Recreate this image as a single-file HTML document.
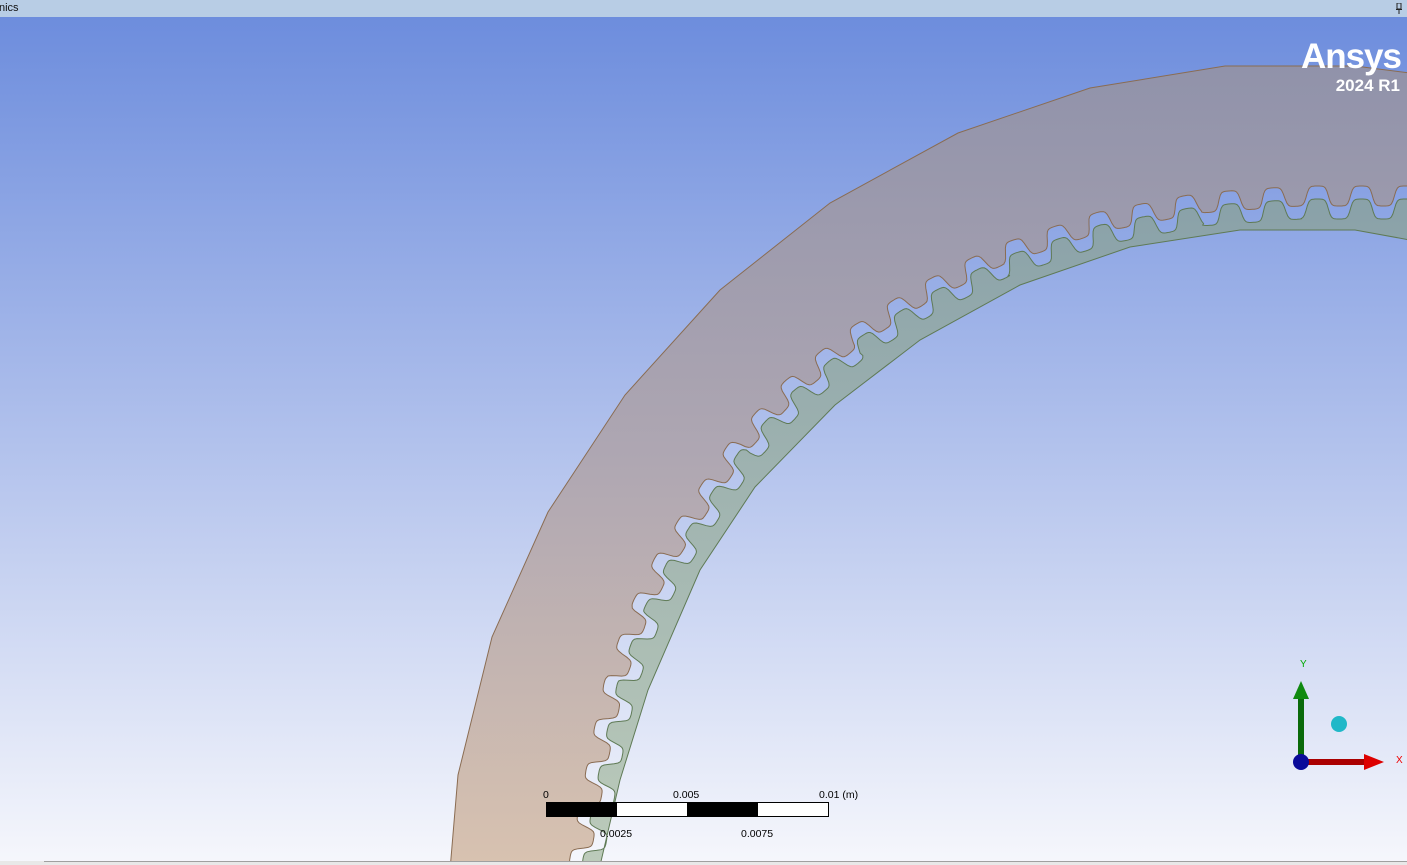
<!DOCTYPE html>
<html><head><meta charset="utf-8"><style>
html,body{margin:0;padding:0;width:1407px;height:865px;overflow:hidden;font-family:"Liberation Sans",sans-serif}
#t{position:absolute;left:0;top:0;width:1407px;height:17px;background:#b8cde5;font-size:11px;line-height:17px;color:#111}
#v{position:absolute;left:0;top:17px}
</style></head><body>
<div id="t"><span style="position:absolute;left:-1px">nics</span><svg style="position:absolute;right:5px;top:3px" width="6" height="11"><rect x="1" y="0" width="4" height="6" fill="none" stroke="#222" stroke-width="1"/><rect x="0" y="6" width="6" height="1" fill="#222"/><rect x="2.5" y="7" width="1" height="4" fill="#222"/></svg></div>
<svg id="v" width="1407" height="848" viewBox="0 17 1407 848">
<defs>
<linearGradient id="bg" gradientUnits="userSpaceOnUse" x1="0" y1="17" x2="0" y2="865">
<stop offset="0" stop-color="#6d8ddd"/><stop offset="0.5" stop-color="#b1c1ec"/><stop offset="1" stop-color="#f6f7fc"/></linearGradient>
<linearGradient id="pk" gradientUnits="userSpaceOnUse" x1="0" y1="60" x2="0" y2="865">
<stop offset="0" stop-color="#9092aa"/><stop offset="0.5" stop-color="#afa7b2"/><stop offset="1" stop-color="#d8c2b0"/></linearGradient>
<linearGradient id="gr" gradientUnits="userSpaceOnUse" x1="0" y1="180" x2="0" y2="865">
<stop offset="0" stop-color="#88a0a8"/><stop offset="1" stop-color="#bccbba"/></linearGradient>
</defs>
<rect x="0" y="17" width="1407" height="848" fill="url(#bg)"/>
<polygon id="pink" fill="url(#pk)" stroke="#8a6c52" stroke-width="1" points=""/>
<polygon id="green" fill="url(#gr)" stroke="#5f7a55" stroke-width="1" points=""/>
<g font-family="Liberation Sans" fill="#fff" font-weight="bold">
<text x="1401" y="68" text-anchor="end" font-size="35" letter-spacing="-1">Ansys</text>
<text x="1400" y="91" text-anchor="end" font-size="17">2024 R1</text>
</g>
<rect x="0" y="861" width="1407" height="4" fill="#e8e8e8"/>
<rect x="44" y="861" width="1363" height="1" fill="#a0a0a0"/>
<rect x="546.5" y="802.5" width="282" height="14" fill="#fff" stroke="#000"/>
<rect x="546" y="802" width="71" height="15" fill="#000"/>
<rect x="687" y="802" width="71" height="15" fill="#000"/>
<g font-size="10.5" font-family="Liberation Sans">
<text x="543" y="798">0</text><text x="673" y="798">0.005</text><text x="819" y="798">0.01 (m)</text>
<text x="600" y="837">0.0025</text><text x="741" y="837">0.0075</text>
</g>
<text x="1300" y="667" font-size="10" fill="#0a0">Y</text>
<text x="1396" y="763" font-size="10" fill="#e00">X</text>
<rect x="1298" y="698" width="6" height="64" fill="#0a6a0a"/>
<polygon points="1293,699 1301,681 1309,699" fill="#108a10"/>
<rect x="1302" y="759" width="64" height="6" fill="#a00"/>
<polygon points="1364,754 1384,762 1364,770" fill="#d00"/>
<circle cx="1301" cy="762" r="8" fill="#0a0a9a"/>
<circle cx="1339" cy="724" r="8" fill="#20b8c8"/>
</svg>
<script>
function poly(pts){var L=[0];for(var i=1;i<pts.length;i++){L.push(L[i-1]+Math.hypot(pts[i][0]-pts[i-1][0],pts[i][1]-pts[i-1][1]));}return L;}
function at(pts,L,s){for(var i=1;i<pts.length;i++){if(s<=L[i]||i==pts.length-1){var seg=L[i]-L[i-1],t=(s-L[i-1])/seg;var dx=pts[i][0]-pts[i-1][0],dy=pts[i][1]-pts[i-1][1];return [pts[i-1][0]+dx*t,pts[i-1][1]+dy*t,dx/seg,dy/seg];}}}
var outer=[[450,870],[458,775],[492,637],[548,512],[625,395],[720,290],[830,203],[958,133],[1090,88],[1225,66],[1355,66],[1410,73]];
var B=[[578,870],[585,830],[600,750],[615,680],[640,610],[665,560],[700,505],[740,445],[790,390],[850,340],[920,295],[1000,255],[1100,222],[1200,203],[1300,196],[1410,196]];
var inner=[[599,870],[620,780],[648,690],[700,570],[755,487],[835,405],[920,340],[1020,285],[1130,247],[1240,230],[1355,230],[1410,240]];
var LB=poly(B),tot=LB[LB.length-1],P=44,W=[],W2=[];
for(var s=0;s<=tot;s+=1.5){var p=at(B,LB,s);var nx=p[3],ny=-p[2];
var f=10*Math.tanh(2.5*Math.sin(2*Math.PI*s/P))/Math.tanh(2.5);
W.push([p[0]+nx*f,p[1]+ny*f]);W2.push([p[0]+nx*(f-13),p[1]+ny*(f-13)]);}
function str(a){return a.map(function(q){return q[0].toFixed(1)+","+q[1].toFixed(1)}).join(" ");}
document.getElementById("pink").setAttribute("points",str(outer.concat(W.slice().reverse())));
document.getElementById("green").setAttribute("points",str(W2.concat(inner.slice().reverse())));
</script>
</body></html>
